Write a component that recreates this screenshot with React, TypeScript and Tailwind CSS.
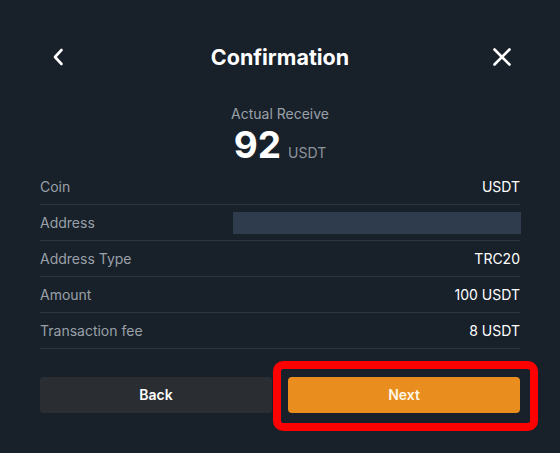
import React from "react";

type Row = { label: string; value?: string; masked?: boolean };

const rows: Row[] = [
  { label: "Coin", value: "USDT" },
  { label: "Address", masked: true },
  { label: "Address Type", value: "TRC20" },
  { label: "Amount", value: "100 USDT" },
  { label: "Transaction fee", value: "8 USDT" },
];

export default function App() {
  return (
    <div
      className="w-[560px] h-[453px] bg-[#18202a] text-white overflow-hidden"
      style={{ fontFamily: "Inter, 'Noto Sans', sans-serif" }}
    >
      {/* header */}
      <div className="flex items-center justify-between px-[48px] pt-[45px]">
        <button className="w-5 h-6 flex items-center justify-center">
          <svg width="12" height="18" viewBox="0 0 12 18" fill="none">
            <path d="M9.5 2 L3 9 L9.5 16" stroke="white" strokeWidth="2.6" strokeLinecap="round" strokeLinejoin="round" />
          </svg>
        </button>
        <h2 className="text-[21.5px] font-bold leading-6">Confirmation</h2>
        <button className="w-5 h-6 flex items-center justify-center">
          <svg width="20" height="20" viewBox="0 0 20 20" fill="none">
            <path d="M2.5 2.5 L17.5 17.5 M17.5 2.5 L2.5 17.5" stroke="white" strokeWidth="2.6" strokeLinecap="round" />
          </svg>
        </button>
      </div>

      {/* amount */}
      <div className="flex flex-col items-center mt-[35px]">
        <div className="text-sm leading-5 text-[#9aa0a8]">Actual Receive</div>
        <div className="flex items-baseline gap-[7px] mt-[3px]">
          <span className="text-[37px] leading-9 font-bold">92</span>
          <span className="text-[14px] text-[#8d939b]">USDT</span>
        </div>
      </div>

      {/* details */}
      <div className="px-[40px] mt-[6px]">
        {rows.map((r) => (
          <div
            key={r.label}
            className="h-[36px] flex items-center justify-between border-b border-[#2d3540]"
          >
            <span className="text-sm text-[#9aa0a8]">{r.label}</span>
            {r.masked ? (
              <span className="w-[288px] h-[22px] bg-[#2e3c4e] -mr-px" />
            ) : (
              <span className="text-sm text-white">{r.value}</span>
            )}
          </div>
        ))}
      </div>

      {/* actions */}
      <div className="flex gap-4 px-[40px] mt-[28px]">
        <button className="flex-1 h-[36px] rounded bg-[#2a2e32] text-sm font-semibold text-white">
          Back
        </button>
        <div className="relative flex-1">
          <button className="w-full h-[36px] rounded bg-[#e98e1e] text-sm font-semibold text-[#fff6e6]">
            Next
          </button>
          <div className="absolute -left-[15px] -top-[16px] -right-[18px] -bottom-[18px] border-[8px] border-[#ff0000] rounded-[10px] pointer-events-none" />
        </div>
      </div>
    </div>
  );
}
